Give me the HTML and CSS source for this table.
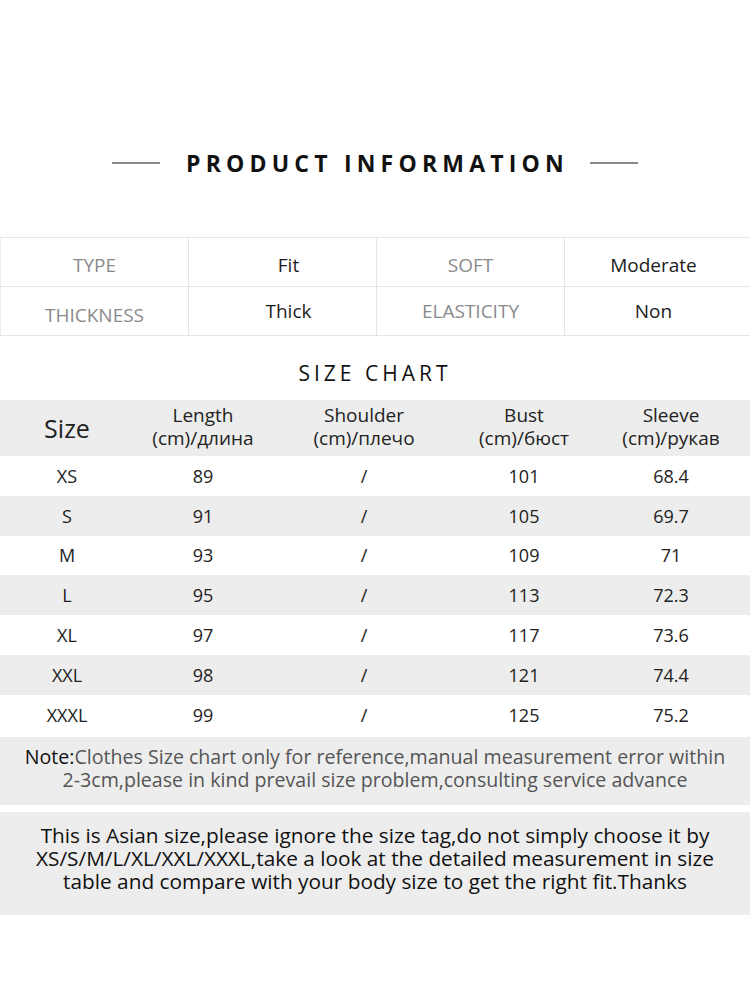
FILE: index.html
```html
<!DOCTYPE html>
<html>
<head>
<meta charset="utf-8">
<link rel="stylesheet" href="styles.css">
</head>
<body>
<div class="page">
  <div class="title-row">
    <span class="rule"></span>
    <h1 class="title">PRODUCT INFORMATION</h1>
    <span class="rule"></span>
  </div>

  <div class="info">
    <div class="info-row top">
      <div class="cell label">TYPE</div>
      <div class="cell value v2">Fit</div>
      <div class="cell label">SOFT</div>
      <div class="cell value v4">Moderate</div>
    </div>
    <div class="info-row">
      <div class="cell label low">THICKNESS</div>
      <div class="cell value v2">Thick</div>
      <div class="cell label">ELASTICITY</div>
      <div class="cell value v4">Non</div>
    </div>
  </div>

  <h2 class="subtitle">SIZE CHART</h2>

  <div class="sizes">
    <div class="srow head">
      <div class="sc big">Size</div>
      <div class="sc">Length<br>(cm)/длина</div>
      <div class="sc">Shoulder<br>(cm)/плечо</div>
      <div class="sc">Bust<br>(cm)/бюст</div>
      <div class="sc">Sleeve<br>(cm)/рукав</div>
    </div>
    <div class="srow"><div class="sc">XS</div><div class="sc">89</div><div class="sc">/</div><div class="sc">101</div><div class="sc">68.4</div></div>
    <div class="srow alt"><div class="sc">S</div><div class="sc">91</div><div class="sc">/</div><div class="sc">105</div><div class="sc">69.7</div></div>
    <div class="srow"><div class="sc">M</div><div class="sc">93</div><div class="sc">/</div><div class="sc">109</div><div class="sc">71</div></div>
    <div class="srow alt"><div class="sc">L</div><div class="sc">95</div><div class="sc">/</div><div class="sc">113</div><div class="sc">72.3</div></div>
    <div class="srow"><div class="sc">XL</div><div class="sc">97</div><div class="sc">/</div><div class="sc">117</div><div class="sc">73.6</div></div>
    <div class="srow alt"><div class="sc">XXL</div><div class="sc">98</div><div class="sc">/</div><div class="sc">121</div><div class="sc">74.4</div></div>
    <div class="srow"><div class="sc">XXXL</div><div class="sc">99</div><div class="sc">/</div><div class="sc">125</div><div class="sc">75.2</div></div>
  </div>

  <div class="note"><span class="note-key">Note:</span>Clothes Size chart only for reference,manual measurement error within<br>2-3cm,please in kind prevail size problem,consulting service advance</div>

  <div class="asian">This is Asian size,please ignore the size tag,do not simply choose it by<br>XS/S/M/L/XL/XXL/XXXL,take a look at the detailed measurement in size<br>table and compare with your body size to get the right fit.Thanks</div>
</div>
</body>
</html>
```

FILE: styles.css
```css
* { box-sizing: border-box; }
html, body { margin: 0; padding: 0; background: #fff; }
body { font-family: "Open Sans", "Noto Sans", sans-serif; color: #222; }
.page { width: 750px; padding-top: 143px; }

.title-row {
  display: flex; align-items: center; justify-content: center;
  height: 40px; gap: 26px;
}
.rule { display: block; width: 48px; height: 2px; background: #8a8a8a; }
.title {
  margin: 0; font-size: 23px; font-weight: 700; letter-spacing: 5.2px;
  color: #111; line-height: 40px; margin-right: -5px;
}

.info { margin-top: 54px; border-top: 1px solid #e6e6e6; }
.info-row { display: grid; grid-template-columns: 188px 188px 188px 186px; height: 49px; border-bottom: 1px solid #e6e6e6; }
.info-row.top .cell { padding-top: 5px; }
.cell { display: flex; align-items: center; justify-content: center; font-size: 19px; border-left: 1px solid #e6e6e6; }
.cell:first-child { border-left: 1px solid #eeeeee; }
.label { color: #8a8a8a; }
.info-row .label.low { padding-top: 7px; }
.value { color: #1c1c1c; }
.v2 { padding-left: 12px; }
.v4 { padding-right: 8px; }

.subtitle {
  margin: 0; height: 64px; padding-top: 12px; text-align: center;
  font-size: 21px; font-weight: 400; letter-spacing: 4px; line-height: 50px; color: #111;
}

.srow { display: grid; grid-template-columns: 134px 138px 184px 136px 158px; height: 39.8px; font-size: 18px; color: #222; }
.srow.alt { background: #ededed; }
.srow.head { background: #ededed; height: 56px; font-size: 19px; line-height: 23px; padding-bottom: 3px; }
.sc { display: flex; align-items: center; justify-content: center; text-align: center; }
.sc.big { font-size: 25px; padding-top: 3px; }

.note {
  margin-top: 2px; background: #ededed; height: 68px; padding-top: 8px;
  text-align: center; font-size: 19.6px; line-height: 23px; color: #555;
}
.note-key { color: #111; }

.asian {
  margin-top: 7px; background: #ededed; height: 103px; padding-top: 12px;
  text-align: center; font-size: 20.8px; line-height: 23px; color: #111;
}
```
